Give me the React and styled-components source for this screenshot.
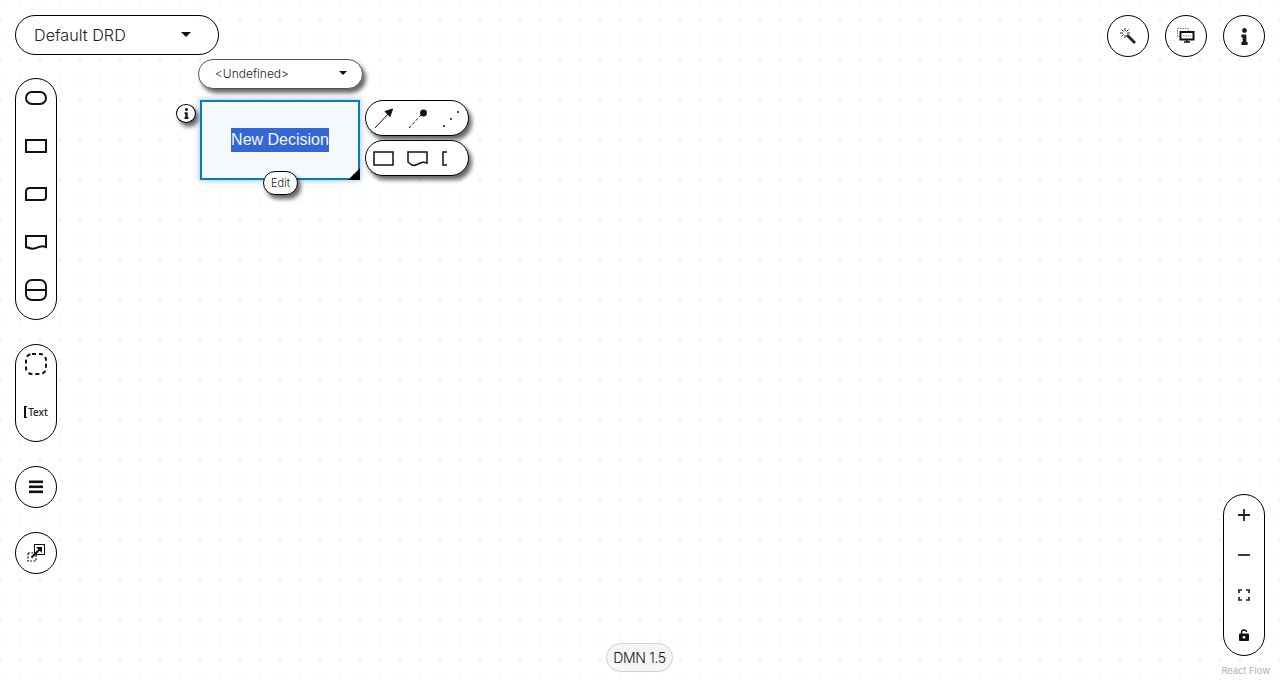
import React from "react";
import styled, { createGlobalStyle } from "styled-components";

const Global = createGlobalStyle`
  html, body { margin: 0; padding: 0; background: #fff; }
  body { font-family: "Inter", "Noto Sans", sans-serif; color: #151515; }
`;

const Canvas = styled.div`
  position: relative;
  width: 1280px;
  height: 680px;
  overflow: hidden;
  background-color: #fff;
  background-image: radial-gradient(circle at 1px 1px, #ececec 1px, transparent 1.2px);
  background-size: 20px 20px;
  background-position: -1px -1px;
`;

const LeftPanel = styled.div`
  position: absolute;
  left: 15px;
  top: 15px;
  display: flex;
  flex-direction: column;
  align-items: flex-start;
`;

const DrdSelector = styled.div`
  width: 204px;
  height: 40px;
  box-sizing: border-box;
  border: 1px solid #000;
  border-radius: 20px;
  background: #fff;
  display: flex;
  align-items: center;
  justify-content: space-between;
  padding: 0 27px 1px 18px;
  font-size: 16.2px;
  font-weight: 300;
  color: #222;
  margin-bottom: 23px;
`;

const Caret = styled.span`
  width: 0;
  height: 0;
  border-left: ${(p) => p.$size}px solid transparent;
  border-right: ${(p) => p.$size}px solid transparent;
  border-top: ${(p) => p.$size}px solid #111;
`;

const Palette = styled.div`
  width: 42px;
  box-sizing: border-box;
  border: 1px solid #000;
  border-radius: 21px;
  background: #fff;
  display: flex;
  flex-direction: column;
  align-items: center;
  padding: 7px 0 17px;
  gap: 24px;
  margin-bottom: 24px;
`;

const PaletteIcon = styled.svg`
  display: block;
  width: 24px;
  height: 24px;
  fill: none;
  stroke: #111;
  stroke-width: 2;
`;

const TextGlyph = styled.div`
  width: 24px;
  height: 24px;
  display: flex;
  align-items: center;
  justify-content: center;
  font-family: "Noto Sans", sans-serif;
  font-size: 10px;
  font-weight: 500;
  color: #222;
  gap: 1px;
`;

const Bracket = styled.span`
  width: 1px;
  height: 10px;
  border: 2px solid #111;
  border-right: none;
  border-top-width: 1px;
  border-bottom-width: 1px;
`;

const RoundButton = styled.div`
  width: 42px;
  height: 42px;
  box-sizing: border-box;
  border: 1px solid #000;
  border-radius: 50%;
  background: #fff;
  display: flex;
  align-items: center;
  justify-content: center;
  margin-bottom: ${(p) => p.$mb || 0}px;
`;

const TopRight = styled.div`
  position: absolute;
  right: 15px;
  top: 15px;
  display: flex;
  gap: 16px;
`;

const Controls = styled.div`
  position: absolute;
  left: 1223px;
  top: 494px;
  width: 42px;
  height: 162px;
  box-sizing: border-box;
  border: 1px solid #000;
  border-radius: 21px;
  background: #fff;
  display: flex;
  flex-direction: column;
  align-items: center;
  justify-content: center;
`;

const ControlSlot = styled.div`
  height: 40px;
  width: 100%;
  display: flex;
  align-items: center;
  justify-content: center;
`;

const Attribution = styled.div`
  position: absolute;
  right: 10px;
  bottom: 3px;
  font-size: 9.5px;
  line-height: 13px;
  font-weight: 300;
  color: #999;
`;

const Version = styled.div`
  position: absolute;
  left: 606px;
  top: 643px;
  width: 67px;
  height: 29px;
  box-sizing: border-box;
  border: 1px solid #d2d2d2;
  border-radius: 15px;
  background: #f5f5f5;
  display: flex;
  align-items: center;
  justify-content: center;
  font-size: 14px;
  font-weight: 300;
  letter-spacing: -0.3px;
  color: #111;
`;

const Node = styled.div`
  position: absolute;
  left: 200px;
  top: 100px;
  width: 160px;
  height: 80px;
  box-sizing: border-box;
  border: 2px solid #0b7bb5;
  background: #f5f9fc;
  box-shadow: 0 0 6px rgba(0, 102, 204, 0.45);
  display: flex;
  align-items: center;
  justify-content: center;
  font-family: "Liberation Sans", Arial, sans-serif;
  font-size: 16px;
`;

const Selected = styled.span`
  background: #3367d6;
  color: #f3f6fb;
  line-height: 24px;
  display: block;
`;

const ResizeCorner = styled.div`
  position: absolute;
  right: -2px;
  bottom: -2px;
  width: 0;
  height: 0;
  border-left: 12px solid transparent;
  border-bottom: 12px solid #000;
`;

const Shadowed = styled.div`
  position: absolute;
  box-sizing: border-box;
  border: 1px solid #000;
  background: #fff;
  box-shadow: 3px 4px 4px rgba(0, 0, 0, 0.6);
`;

const TypeSelect = styled(Shadowed)`
  left: 198px;
  top: 59px;
  width: 165px;
  height: 30px;
  border-radius: 15px;
  border-color: #555;
  display: flex;
  align-items: center;
  justify-content: space-between;
  padding: 0 15px 2px 16px;
  font-size: 12px;
  font-weight: 300;
  color: #222;
`;

const InfoBubble = styled(Shadowed)`
  left: 176px;
  top: 104px;
  width: 20px;
  height: 19px;
  border-radius: 50%;
  display: flex;
  align-items: center;
  justify-content: center;
`;

const EditBubble = styled(Shadowed)`
  left: 263px;
  top: 171px;
  width: 35px;
  height: 24px;
  border-radius: 12px;
  display: flex;
  align-items: center;
  justify-content: center;
  font-size: 11px;
  font-weight: 300;
  color: #222;
`;

const ActionPill = styled(Shadowed)`
  left: 365px;
  top: ${(p) => p.$top}px;
  width: 104px;
  height: 36px;
  border-radius: 18px;
  display: flex;
  align-items: center;
  padding-left: 7px;
  gap: 13px;
`;

const ActionIcon = styled.svg`
  display: block;
  width: 21px;
  height: 21px;
  flex: none;
  fill: none;
  stroke: #111;
  stroke-width: ${(p) => p.$weight || 1};
`;

const Info = ({ size = 20 }) => (
  <svg width={size} height={size} viewBox="0 0 192 512" fill="#1a1a1a">
    <path d="M20 424.200h20V279.800H20c-11 0-20-9-20-20V212c0-11 9-20 20-20h112c11 0 20 9 20 20v212.200h20c11 0 20 9 20 20V492c0 11-9 20-20 20H20c-11 0-20-9-20-20v-47.800c0-11 9-20 20-20zM96 0C56.200 0 24 32.200 24 72s32.200 72 72 72 72-32.200 72-72S135.800 0 96 0z" />
  </svg>
);

export default function App() {
  return (
    <Canvas>
      <Global />
      <LeftPanel>
        <DrdSelector>
          <span>Default DRD</span>
          <Caret $size={5} />
        </DrdSelector>
        <Palette>
          <PaletteIcon viewBox="0 0 24 24"><rect x="2" y="6" width="20" height="12" rx="6" /></PaletteIcon>
          <PaletteIcon viewBox="0 0 24 24"><rect x="2" y="6" width="20" height="12" /></PaletteIcon>
          <PaletteIcon viewBox="0 0 24 24"><path d="M6 6h16v9q0 3-3 3H2V10q0-4 4-4z" /></PaletteIcon>
          <PaletteIcon viewBox="0 0 24 24"><path d="M2 6h20v11q-2.500-1-5-.5t-5 1.500q-3 1-5 .5t-5-1.500z" /></PaletteIcon>
          <PaletteIcon viewBox="0 0 24 24"><rect x="2" y="2" width="20" height="20" rx="6" /><path d="M2 12h20" /></PaletteIcon>
        </Palette>
        <Palette>
          <PaletteIcon viewBox="0 0 24 24" strokeDasharray="4 3"><rect x="2" y="2" width="20" height="20" rx="6" /></PaletteIcon>
          <TextGlyph><Bracket />Text</TextGlyph>
        </Palette>
        <RoundButton $mb={24}>
          <svg width="14" height="14" viewBox="0 0 14 14" fill="#111">
            <rect y="0.500" width="14" height="2.600" />
            <rect y="5.500" width="14" height="2.600" />
            <rect y="10.500" width="14" height="2.600" />
          </svg>
        </RoundButton>
        <RoundButton>
          <svg width="18" height="18" viewBox="0 0 18 18" fill="none" stroke="#111">
            <rect x="7.500" y="0.500" width="10" height="10" strokeWidth="1" />
            <rect x="1" y="9" width="8" height="8" strokeDasharray="2 1.300" strokeWidth="1.200" fill="#fff" />
            <path d="M4.500 13.500L13 5" strokeWidth="2" />
            <path d="M9 3h6v6z" fill="#111" stroke="none" />
          </svg>
        </RoundButton>
      </LeftPanel>

      <TopRight>
        <RoundButton>
          <svg width="18" height="18" viewBox="0 0 18 18" fill="none" stroke="#222">
            <path d="M8 8l8 8" strokeWidth="2.800" />
            <path d="M6 1v3M6 8v3M1 6h3M8 6h3M2.500 2.500l2 2M9.500 2.500l-2 2M2.500 9.500l2-2" strokeWidth="1" />
          </svg>
        </RoundButton>
        <RoundButton>
          <svg width="18" height="16" viewBox="0 0 18 16" fill="none">
            <rect x="0.500" y="0.500" width="11" height="8" stroke="#777" strokeDasharray="1.500 1" />
            <rect x="3.500" y="4" width="13" height="7.500" fill="#fff" stroke="#111" strokeWidth="2" />
            <path d="M6 7.800h8" stroke="#888" strokeDasharray="1.500 1" />
            <path d="M7 14h6M10 12v2" stroke="#111" strokeWidth="1.500" />
          </svg>
        </RoundButton>
        <RoundButton>
          <Info size={17} />
        </RoundButton>
      </TopRight>

      <TypeSelect>
        <span>&lt;Undefined&gt;</span>
        <Caret $size={4} />
      </TypeSelect>
      <InfoBubble><Info size={11} /></InfoBubble>
      <Node>
        <Selected>New Decision</Selected>
        <ResizeCorner />
      </Node>
      <EditBubble>Edit</EditBubble>
      <ActionPill $top={100}>
        <ActionIcon viewBox="0 0 21 21">
          <path d="M2 20L16 5" />
          <path d="M19.500 1l-7.500 2.500 5 5z" fill="#111" />
        </ActionIcon>
        <ActionIcon viewBox="0 0 21 21">
          <path d="M2 20L14 7" strokeDasharray="3 2" />
          <circle cx="16.500" cy="5" r="3.400" fill="#111" stroke="none" />
        </ActionIcon>
        <ActionIcon viewBox="0 0 21 21">
          <circle cx="3" cy="18" r="1" fill="#111" stroke="none" />
          <circle cx="10" cy="11" r="1" fill="#111" stroke="none" />
          <circle cx="17" cy="4" r="1" fill="#111" stroke="none" />
        </ActionIcon>
      </ActionPill>
      <ActionPill $top={140}>
        <ActionIcon viewBox="0 0 21 21" $weight={1.5}><rect x="1" y="4" width="19" height="13" /></ActionIcon>
        <ActionIcon viewBox="0 0 21 21" $weight={1.5}><path d="M1 4h19v11q-3-1-5-.5t-5 2q-3 1.500-5 .5T1 14z" /></ActionIcon>
        <ActionIcon viewBox="0 0 21 21" $weight={1.5}><path d="M6 4H2v13h4" /></ActionIcon>
      </ActionPill>

      <Controls>
        <ControlSlot>
          <svg width="14" height="14" viewBox="0 0 14 14" stroke="#222" strokeWidth="1.800"><path d="M7 1v12M1 7h12" /></svg>
        </ControlSlot>
        <ControlSlot>
          <svg width="14" height="14" viewBox="0 0 14 14" stroke="#222" strokeWidth="1.800"><path d="M1 7h12" /></svg>
        </ControlSlot>
        <ControlSlot>
          <svg width="14" height="14" viewBox="0 0 14 14" fill="none" stroke="#222" strokeWidth="1.700"><path d="M2 5V2h3M9 2h3v3M12 9v3H9M5 12H2V9" /></svg>
        </ControlSlot>
        <ControlSlot>
          <svg width="10" height="12" viewBox="0 0 10 12" fill="none">
            <path d="M2.500 5V3.200Q2.500 1 5 1t2.500 2" stroke="#111" strokeWidth="1.400" />
            <rect x="0" y="4.500" width="10" height="7.500" rx="1" fill="#111" />
            <circle cx="5" cy="8.200" r="1.300" fill="#fff" />
          </svg>
        </ControlSlot>
      </Controls>
      <Attribution>React Flow</Attribution>
      <Version>DMN 1.5</Version>
    </Canvas>
  );
}
